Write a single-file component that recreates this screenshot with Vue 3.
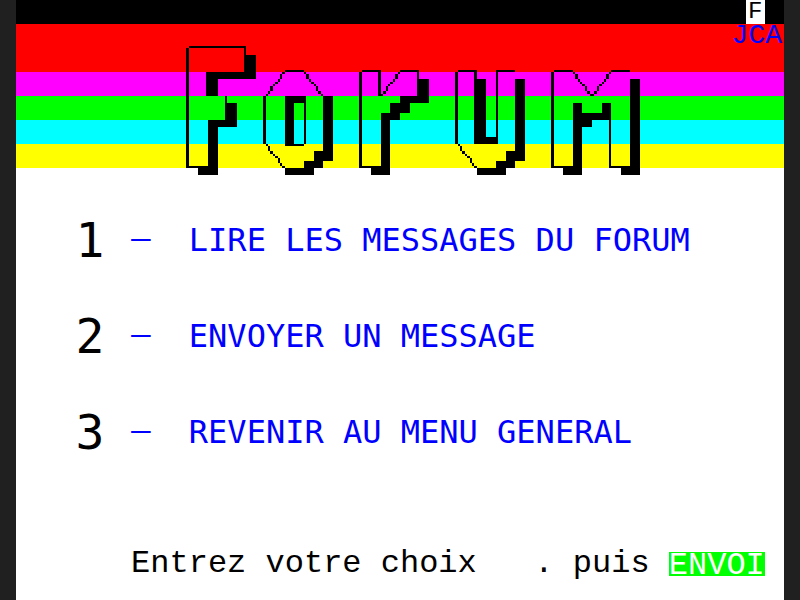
<script setup>
import { ref } from 'vue'

const choice = ref('')

const entries = [
  { key: '1', label: 'LIRE LES MESSAGES DU FORUM' },
  { key: '2', label: 'ENVOYER UN MESSAGE' },
  { key: '3', label: 'REVENIR AU MENU GENERAL' }
]

// Outlines and shadows of the title letters, as [left, top, right, bottom]
const strokes = [
  // F
  [186, 48, 189, 168], [189, 46, 246, 48], [244, 46, 246, 55], [244, 55, 256, 79],
  [206, 72, 256, 79], [206, 72, 218, 96], [225, 96, 227, 103], [225, 103, 237, 127],
  [208, 120, 237, 127], [208, 120, 218, 175], [198, 168, 218, 175], [186, 166, 208, 168],
  // o
  [285, 70, 304, 72], [263, 96, 266, 144], [285, 96, 306, 103], [285, 96, 294, 146],
  [304, 96, 306, 144], [285, 144, 304, 146], [323, 96, 333, 161], [314, 151, 333, 161],
  [304, 161, 323, 168], [285, 168, 314, 175],
  // r
  [359, 72, 362, 168], [362, 70, 381, 72], [378, 70, 381, 96], [400, 70, 419, 72],
  [417, 70, 419, 79], [417, 79, 429, 103], [400, 96, 429, 103], [390, 103, 410, 113],
  [381, 113, 400, 120], [381, 113, 390, 175], [371, 168, 390, 175], [359, 166, 381, 168],
  // u
  [455, 72, 458, 144], [458, 70, 477, 72], [474, 70, 477, 79], [474, 79, 486, 144],
  [474, 137, 498, 144], [496, 70, 498, 144], [496, 70, 515, 72], [515, 79, 525, 161],
  [506, 151, 525, 161], [496, 161, 515, 168], [477, 168, 506, 175],
  // m
  [551, 72, 554, 168], [554, 70, 573, 72], [611, 70, 630, 72], [573, 103, 582, 175],
  [563, 168, 582, 175], [573, 113, 611, 120], [582, 113, 592, 127], [602, 103, 611, 120],
  [609, 120, 611, 168], [551, 166, 573, 168], [609, 166, 630, 168], [630, 79, 640, 175],
  [621, 168, 640, 175]
]

// Mosaic diagonals fill one character cell: [column, top, falls to the right]
const diagonals = [
  [13, 72, false], [15, 72, true], [13, 144, true], [19, 72, false],
  [23, 144, true], [29, 72, true], [30, 72, false]
]
const runs = [[0, 1], [1, 3], [3, 4], [4, 5], [5, 6], [6, 8], [8, 9], [9, 10]]

const diagonalRects = diagonals.flatMap(([col, top, falling]) =>
  runs.map((_, i) => {
    const [from, to] = runs[i]
    const step = falling ? i : 7 - i
    const x = 16 + col * 19.2 + step * 2.4
    return [
      Math.round(x), Math.round(top + from * 2.4),
      Math.round(x + 2.4), Math.round(top + to * 2.4)
    ]
  })
)

const logoPath = [...strokes, ...diagonalRects]
  .map(([l, t, r, b]) => `M${l} ${t}H${r}V${b}H${l}Z`)
  .join('')
</script>

<template>
  <main class="screen">
    <div class="status"><span class="flag">F</span></div>
    <header class="banner">
      <h1 class="title">
        <svg class="logo" viewBox="160 24 480 152" role="img" aria-label="Forum">
          <path :d="logoPath" />
        </svg>
      </h1>
      <span class="signature">JCA</span>
    </header>

    <ol class="menu">
      <li v-for="entry in entries" :key="entry.key" class="entry">
        <span class="number">{{ entry.key }}</span>
        <span class="dash">—</span>
        <span class="label">{{ entry.label }}</span>
      </li>
    </ol>

    <form class="prompt" @submit.prevent>
      <label for="choice">Entrez votre choix</label>
      <input id="choice" v-model="choice" class="choice" type="text" maxlength="1" autocomplete="off">
      <span class="hint">. puis</span>
      <button class="send" type="submit">ENVOI</button>
    </form>
  </main>
</template>

<style>
body {
  margin: 0;
  background: #202020;
}
</style>

<style scoped>
.screen {
  box-sizing: border-box;
  display: flex;
  flex-direction: column;
  min-height: 100vh;
  margin: 0 16px;
  padding-bottom: 24px;
  background: #fff;
  color: #000;
  font-family: "Liberation Mono", monospace;
  font-size: 32px;
  line-height: 24px;
}

.status {
  display: flex;
  justify-content: flex-end;
  padding-right: 1ch;
  background: #000;
}

.flag {
  width: 19px;
  height: 24px;
  background: #fff;
  font-size: 24px;
  text-align: center;
}

.banner {
  position: relative;
  height: 144px;
  background: linear-gradient(
    #f00 0 48px,
    #f0f 48px 72px,
    #0f0 72px 96px,
    #0ff 96px 120px,
    #ff0 120px
  );
}

.title {
  display: flex;
  justify-content: center;
  margin: 0;
}

.logo {
  flex: none;
  width: 480px;
  height: 152px;
  shape-rendering: crispEdges;
}

.signature {
  position: absolute;
  top: 0;
  right: 2px;
  color: #00f;
  font-size: 28px;
}

.menu {
  display: grid;
  gap: 48px;
  margin: 48px 0;
  padding: 0 0 0 3ch;
  list-style: none;
}

.entry {
  display: grid;
  grid-template-columns: 3ch 3ch 1fr;
  align-items: center;
  min-height: 48px;
}

.number {
  padding-left: 2px;
  font-family: "DejaVu Sans Mono", monospace;
  font-size: 48px;
  line-height: 48px;
}

.dash {
  color: #00f;
}

.label {
  color: #00f;
  font-family: "DejaVu Sans Mono", monospace;
  line-height: 48px;
}

.prompt {
  display: flex;
  justify-content: flex-end;
  margin-top: auto;
  padding-right: 1ch;
  white-space: nowrap;
}

.choice,
.send {
  box-sizing: border-box;
  margin: 0;
  padding: 0;
  border: 0;
  border-radius: 0;
  font: inherit;
}

.choice {
  width: 3ch;
  height: 24px;
  background: transparent;
  color: inherit;
  text-align: center;
  outline: 0;
}

.send {
  width: 5ch;
  height: 24px;
  margin-left: 1ch;
  padding-top: 2px;
  background: #0f0;
  color: #fff;
  cursor: pointer;
}
</style>
